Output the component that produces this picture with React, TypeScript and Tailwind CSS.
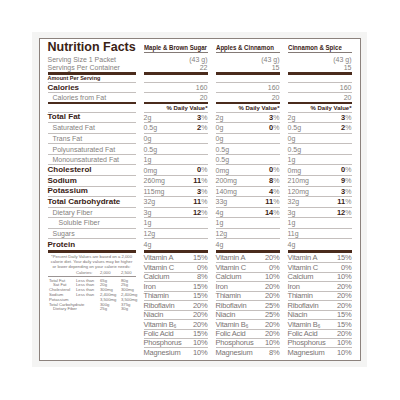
import React from 'react';

const GRID = 'grid grid-cols-[88px_64px_64px_64px] gap-x-2';
const LINE = 'border-b border-[#c4bfbd]';

const flavors = ['Maple & Brown Sugar', 'Apples & Cinnamon', 'Cinnamon & Spice'];
const servings = ['22', '15', '15'];

type Nutrient = {
  label: string;
  bold?: boolean;
  indent?: 0 | 1 | 2;
  vals: [string, string?][];
};

const nutrients: Nutrient[] = [
  { label: 'Total Fat', bold: true, vals: [['2g', '3'], ['2g', '3'], ['2g', '3']] },
  { label: 'Saturated Fat', indent: 1, vals: [['0.5g', '2'], ['0g', '0'], ['0.5g', '2']] },
  { label: 'Trans Fat', indent: 1, vals: [['0g'], ['0g'], ['0g']] },
  { label: 'Polyunsaturated Fat', indent: 1, vals: [['0.5g'], ['0.5g'], ['0.5g']] },
  { label: 'Monounsaturated Fat', indent: 1, vals: [['1g'], ['0.5g'], ['1g']] },
  { label: 'Cholesterol', bold: true, vals: [['0mg', '0'], ['0mg', '0'], ['0mg', '0']] },
  { label: 'Sodium', bold: true, vals: [['260mg', '11'], ['200mg', '8'], ['210mg', '9']] },
  { label: 'Potassium', bold: true, vals: [['115mg', '3'], ['140mg', '4'], ['120mg', '3']] },
  { label: 'Total Carbohydrate', bold: true, vals: [['32g', '11'], ['33g', '11'], ['32g', '11']] },
  { label: 'Dietary Fiber', indent: 1, vals: [['3g', '12'], ['4g', '14'], ['3g', '12']] },
  { label: 'Soluble Fiber', indent: 2, vals: [['1g'], ['1g'], ['1g']] },
  { label: 'Sugars', indent: 1, vals: [['12g'], ['12g'], ['11g']] },
  { label: 'Protein', bold: true, vals: [['4g'], ['4g'], ['4g']] },
];

const vitaminNames = [
  'Vitamin A',
  'Vitamin C',
  'Calcium',
  'Iron',
  'Thiamin',
  'Riboflavin',
  'Niacin',
  'Vitamin B6',
  'Folic Acid',
  'Phosphorus',
  'Magnesium',
];

const vitamins = [
  ['15', '0', '8', '15', '15', '20', '20', '20', '15', '10', '10'],
  ['20', '0', '10', '20', '20', '25', '25', '20', '20', '10', '8'],
  ['15', '0', '10', '20', '20', '20', '15', '15', '20', '10', '10'],
];

const limits = [
  ['Total Fat', 'Less than', '65g', '80g', false],
  ['Sat Fat', 'Less than', '20g', '25g', true],
  ['Cholesterol', 'Less than', '300mg', '300mg', false],
  ['Sodium', 'Less than', '2,400mg', '2,400mg', false],
  ['Potassium', '', '3,500mg', '3,500mg', false],
  ['Total Carbohydrate', '', '300g', '375g', false],
  ['Dietary Fiber', '', '25g', '30g', true],
] as const;

function Bar({ thin }: { thin?: boolean }) {
  return (
    <div className={GRID}>
      {[0, 1, 2, 3].map((i) => (
        <div key={i} className={thin ? 'h-[2px] bg-[#4a2b1c]' : 'h-[3px] bg-[#4a2b1c]'} />
      ))}
    </div>
  );
}

function VitaminLabel({ name }: { name: string }) {
  if (name === 'Vitamin B6') {
    return (
      <span>
        Vitamin B<sub className="text-[4.5px] align-baseline relative top-[1px]">6</sub>
      </span>
    );
  }
  return <span>{name}</span>;
}

export default function App() {
  return (
    <div
      className="w-[400px] h-[400px] bg-white pt-[32px] pl-[32px]"
      style={{ fontFamily: '"Liberation Sans", Arial, sans-serif' }}
    >
      <div className="w-[335px] h-[335px] bg-[#f4f4f3] pt-[6px] pl-[7px]">
        <div className="w-[322px] h-[323px] bg-white border border-[#8c827d] pl-[7.5px] pt-[1px] text-[7px] leading-none text-[#857f7e]">
          {/* heading */}
          <div className={GRID + ' h-[15px]'}>
            <div className="pt-[1px] text-[12.5px] font-bold leading-none text-[#3a2215] whitespace-nowrap">
              Nutrition Facts
            </div>
            {flavors.map((f) => (
              <div
                key={f}
                className="h-[12.5px] border-b border-[#847a76] flex items-end pb-[1px] text-[7px] font-bold text-[#3a2215] whitespace-nowrap"
              >
                <span className="inline-block origin-left scale-x-[0.87]">{f}</span>
              </div>
            ))}
          </div>

          {/* serving info */}
          <div className={GRID + ' h-[8px]'}>
            <div className="flex items-center whitespace-nowrap">Serving Size 1 Packet</div>
            {flavors.map((f) => (
              <div key={f} className="flex items-center justify-end">(43 g)</div>
            ))}
          </div>
          <div className={GRID + ' h-[8.5px]'}>
            <div className="flex items-center whitespace-nowrap">Servings Per Container</div>
            {servings.map((s, i) => (
              <div key={i} className="flex items-center justify-end">{s}</div>
            ))}
          </div>
          <div className="h-[0.5px]" />
          <Bar />

          {/* amount per serving */}
          <div className={GRID + ' h-[8.3px]'}>
            <div className={LINE + ' flex items-center text-[5.5px] font-bold text-[#3a2215]'}>Amount Per Serving</div>
            {flavors.map((f) => (
              <div key={f} className={LINE} />
            ))}
          </div>
          <div className={GRID + ' h-[9.7px]'}>
            <div className={LINE + ' flex items-center text-[8px] font-bold text-[#3a2215]'}>Calories</div>
            {flavors.map((f) => (
              <div key={f} className={LINE + ' flex items-center justify-end'}>160</div>
            ))}
          </div>
          <div className={GRID + ' h-[8.7px]'}>
            <div className="flex items-center pl-[5px]">Calories from Fat</div>
            {flavors.map((f) => (
              <div key={f} className="flex items-center justify-end">20</div>
            ))}
          </div>
          <Bar thin />
          <div className={GRID + ' h-[9px]'}>
            <div className={LINE} />
            {flavors.map((f) => (
              <div key={f} className={LINE + ' flex items-center justify-end text-[6px] font-bold text-[#3a2215] whitespace-nowrap'}>
                % Daily Value*
              </div>
            ))}
          </div>

          {/* nutrients */}
          {nutrients.map((n, ri) => {
            const last = ri === nutrients.length - 1;
            const cell = (last ? '' : LINE) + ' h-[10.55px] flex items-center';
            return (
              <div key={n.label} className={GRID}>
                <div
                  className={
                    cell +
                    (n.bold ? ' text-[8px] font-bold text-[#3a2215]' : '') +
                    (n.indent === 1 ? ' pl-[5px]' : n.indent === 2 ? ' pl-[11px]' : '') +
                    ' whitespace-nowrap'
                  }
                >
                  {n.label}
                </div>
                {n.vals.map(([amt, pct], ci) => (
                  <div key={ci} className={cell + ' justify-between'}>
                    <span>{amt}</span>
                    {pct !== undefined && (
                      <span>
                        <span className="text-[7.5px] font-bold text-[#3a2215]">{pct}</span>%
                      </span>
                    )}
                  </div>
                ))}
              </div>
            );
          })}
          <Bar />

          {/* footnote + vitamins */}
          <div className={GRID + ' pt-[1px]'}>
            <div className="text-[4.2px] text-[#767070]">
              <p className="text-center leading-[5.3px] whitespace-nowrap">
                *Percent Daily Values are based on a 2,000
                <br />
                calorie diet. Your daily values may be higher
                <br />
                or lower depending on your calorie needs:
              </p>
              <div className="mt-[1.4px] h-[6px] border-b border-[#9a9392] grid grid-cols-[27px_24px_21px_16px] pl-[1.5px] items-center">
                <span />
                <span>Calories:</span>
                <span>2,000</span>
                <span>2,500</span>
              </div>
              <div className="mt-[1.3px]">
                {limits.map(([a, b, c, d, ind]) => (
                  <div key={a} className="h-[4.8px] grid grid-cols-[27px_24px_21px_16px] pl-[1.5px] items-center whitespace-nowrap">
                    <span className={ind ? 'pl-[4px]' : ''}>{a}</span>
                    <span>{b}</span>
                    <span>{c}</span>
                    <span>{d}</span>
                  </div>
                ))}
              </div>
            </div>
            {vitamins.map((col, ci) => (
              <div key={ci} className="flex flex-col">
                {vitaminNames.map((v, vi) => (
                  <div
                    key={v}
                    className={
                      (vi === vitaminNames.length - 1 ? '' : LINE) +
                      ' h-[9.47px] flex items-center justify-between text-[7.5px] tracking-[-0.2px] text-[#7a7473] whitespace-nowrap'
                    }
                  >
                    <VitaminLabel name={v} />
                    <span>{col[vi]}%</span>
                  </div>
                ))}
              </div>
            ))}
          </div>
        </div>
      </div>
    </div>
  );
}
